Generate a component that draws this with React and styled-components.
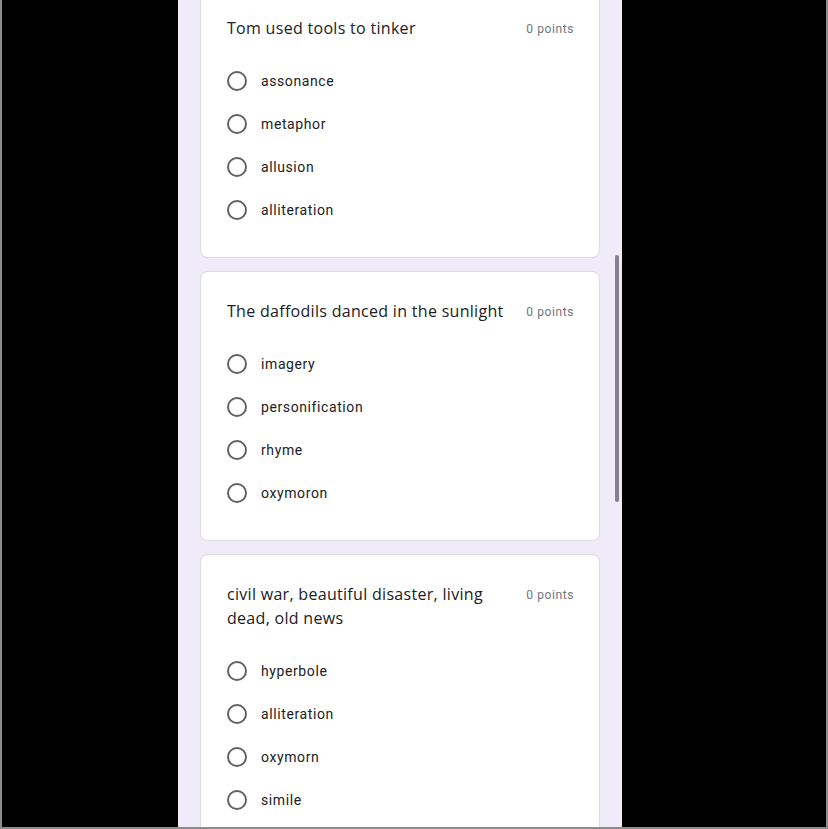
import React from "react";
import styled, { createGlobalStyle } from "styled-components";

const Global = createGlobalStyle`
  html, body { margin: 0; padding: 0; background: #000; }
  body { font-family: Roboto, "Noto Sans", Arial, sans-serif; overflow: hidden; }
  * { box-sizing: border-box; }
`;

const Frame = styled.div`
  width: 828px;
  height: 829px;
  background: #000;
  border: 2px solid #8c8c8c;
  border-top: none;
  overflow: hidden;
  display: grid;
  grid-template-columns: 176px 444px 1fr;
`;

const Column = styled.div`
  grid-column: 2;
  position: relative;
  background: #f0ebf8;
  height: 100%;
  overflow: hidden;
  padding: 0 22px;
`;

const List = styled.div`
  display: flex;
  flex-direction: column;
  gap: 13px;
  margin-top: -12px;
`;

const Card = styled.div`
  background: #fff;
  border: 1px solid #dadce0;
  border-radius: 8px;
  padding: 27px 25px 26px 26px;
`;

const Header = styled.div`
  display: flex;
  align-items: flex-start;
  gap: 16px;
`;

const Title = styled.div`
  flex: 1;
  font-family: "Open Sans", Roboto, sans-serif;
  font-size: 16px;
  line-height: 24px;
  color: #202124;
  letter-spacing: 0.3px;
`;

const Points = styled.div`
  font-size: 12px;
  line-height: 22px;
  padding-top: 2px;
  color: #70757a;
  white-space: nowrap;
  letter-spacing: 0.6px;
`;

const Options = styled.div`
  display: flex;
  flex-direction: column;
  margin-top: 19px;
`;

const Option = styled.label`
  display: flex;
  align-items: center;
  height: 43px;
  gap: 14px;
  cursor: pointer;
`;

const Radio = styled.span`
  width: 20px;
  height: 20px;
  border-radius: 50%;
  border: 2px solid #5f6368;
  flex-shrink: 0;
`;

const Label = styled.span`
  font-size: 14px;
  color: #202124;
  letter-spacing: 0.6px;
`;

const Thumb = styled.div`
  position: absolute;
  left: 437px;
  top: 255px;
  width: 4px;
  height: 247px;
  border-radius: 2px;
  background: #85818f;
`;

const questions = [
  { title: "Tom used tools to tinker", options: ["assonance", "metaphor", "allusion", "alliteration"] },
  { title: "The daffodils danced in the sunlight", options: ["imagery", "personification", "rhyme", "oxymoron"] },
  { title: "civil war, beautiful disaster, living dead, old news", options: ["hyperbole", "alliteration", "oxymorn", "simile"] },
];

export default function App() {
  return (
    <>
      <Global />
      <Frame>
        <Column>
          <List>
            {questions.map((q) => (
              <Card key={q.title}>
                <Header>
                  <Title>{q.title}</Title>
                  <Points>0 points</Points>
                </Header>
                <Options>
                  {q.options.map((o) => (
                    <Option key={o}>
                      <Radio />
                      <Label>{o}</Label>
                    </Option>
                  ))}
                </Options>
              </Card>
            ))}
          </List>
          <Thumb />
        </Column>
      </Frame>
    </>
  );
}
